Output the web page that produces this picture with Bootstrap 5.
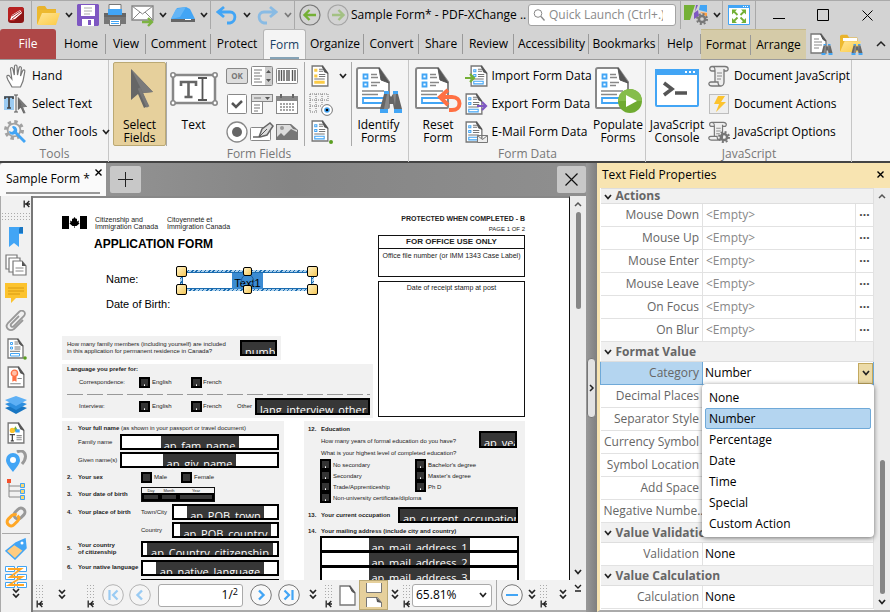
<!DOCTYPE html>
<html lang="en">
<head>
<meta charset="utf-8">
<meta name="viewport" content="width=device-width, initial-scale=1">
<title>Sample Form* - PDF-XChange Editor</title>
<link rel="stylesheet" href="https://cdn.jsdelivr.net/npm/bootstrap@5.3.0/dist/css/bootstrap.min.css">
<style>
:root{--ui:"Open Sans","Noto Sans",sans-serif;--doc:"Liberation Sans",Arial,sans-serif}
body{font:12px/16px var(--ui);color:#000;background:#d3d3d3;height:100vh;overflow:hidden}
button,input,select{font:inherit;color:inherit}
button{background:none;border:0;padding:0}
svg{display:block;flex:none}
.cell{display:flex;align-items:center;justify-content:center;min-width:0}
.s8{width:8px;height:8px}.s22{width:22px;height:22px}.s24{width:24px;height:24px}.s48{width:48px;height:48px}
.rule{border-left:1px solid #a9a9a9}
/* title bar */
.titlebar{display:grid;height:29px;flex:none;border-top:1px solid #aaa;grid-template-columns:31px 32px 11px 27px 28px 28px 12px 28px 13px 32px 10px 30px 12px 31px 26px minmax(100px,1fr) 148px 35px 11px 33px 46px 44px 45px}
.quick{height:22px;background:#fff;border:1px solid #a3a3a3;border-radius:3px;color:#888}
.quick input{border:0;background:none;outline:0;padding:0;width:100%}
.quick input::placeholder{color:#8a8a8a;opacity:1}
/* ribbon tabs */
.tabs{display:grid;height:31px;flex:none;grid-template-columns:56fr 50fr 40fr 65fr 52fr 43fr 58fr 55fr 44fr 51fr 75fr 70fr 42fr 50fr 55fr 84fr;border-bottom:1px solid #9b9b9b}
.tabs .tab{position:relative;white-space:nowrap;min-width:0}
.tabs .tab.div::after{content:"";position:absolute;right:0;top:5px;height:20px;border-right:1px solid #999}
.tab.file{background:#ae4747;color:#fff;border-radius:3px 3px 0 0}
.tab.active{background:#f4f4f4;color:#183f63;border-radius:3px 3px 0 0;border:1px solid #b5b5b5;border-bottom:0}
.tab.active::after{content:"";position:absolute;left:6px;right:6px;bottom:0;height:2px;background:#86a3b6}
.tab.ctx{background:#d5cba8;border-top:1px solid #c5b98a}
/* ribbon */
.ribbon{height:103px;flex:none;background:#f4f4f4;border-bottom:2px solid #444;display:grid;grid-template-columns:109px 300px 237px 206px 1fr}
.group{display:flex;flex-direction:column;border-right:1px solid #c6c6c6;padding:2px 3px 0 4px;min-width:0}
.group.tight{padding:2px 1px 0 2px}
.group .tools{display:flex;height:84px}
.group .cap{text-align:center;color:#777}
.big{width:54px;flex:none;line-height:13px;display:flex;flex-direction:column;align-items:center;justify-content:flex-start;padding-top:3px;white-space:nowrap}
.big.slim{width:52px}
.big svg{margin-bottom:5px}
.big.on{width:53px;background:#e6d09c;border:1px solid #bba974;border-radius:2px;padding-top:2px}
.line{display:flex;align-items:center;height:28px;gap:4px;white-space:nowrap}
.tight .line{gap:2px}
.trio{display:grid;grid-template-rows:repeat(3,28px);place-items:center}
.trio.three{grid-template-columns:repeat(3,1fr)}
/* work area */
.strip{height:33px;background:linear-gradient(90deg,#9a9a9a,#858585 50%,#8f8f8f)}
.strip .doc{width:106px;background:#fafafa;border-radius:3px 0 0 0;padding:8px 4px 0 6px;position:relative;white-space:nowrap}
.strip .doc::after{content:"";position:absolute;left:6px;right:6px;bottom:2px;height:2px;background:#999}
.strip .doc svg{margin-top:-2px}
.strip .sq{background:#c8c8c8;border-radius:2px;height:27px}
.side{width:33px;background:#f1f1f1;border-left:1px solid #aaa;border-right:2px solid #777}
.panes{gap:6px;padding-top:4px}
.pane.pane-tag{border-top:1px solid #aaa;padding:4px 3px 0;margin-top:-1px}
.grip{background:radial-gradient(circle,#aaa 0.8px,transparent 1px) 0 0/3px 3px}
.side .grip{height:10px;width:100%}
.viewer{background:#fff;border-top:2px solid #888;border-right:1px solid #111;overflow:hidden}
.vbar{width:16px;background:#ececec}
.thumb{background:#868686;border-radius:3px;width:5px;height:97px}
.thumb.long{height:134px}
.split{width:11px;background:linear-gradient(90deg,#999,#7f7f7f)}
.split .knob{width:9px;height:60px;background:#e2e2e2;border:1px solid #777;border-radius:4px}
/* paper */
.paper{font:6px/8px var(--doc);color:#222;padding:14px 44px 0 29px;white-space:nowrap;min-width:490px}
.paper label,.paper span{min-width:0}
.paper h1{font:700 12px/14px var(--doc);margin:7px 0 15px 32px;color:#000}
.paper .f7{font-size:7px;line-height:7px}
.shade{background:#f1f1f1}
.grow{display:grid;align-items:center}
.upper{width:311px}
.upper .intro{line-height:7px;width:72px}
.upper .intro+.intro{width:auto}
.who{display:grid;grid-template-columns:70px 142px;grid-template-rows:29px 20px;padding-left:44px;align-items:center;font-size:11px;color:#000}
.who label{padding-bottom:3px}.who span{padding-bottom:2px}
.fam{display:flex;align-items:center;width:219px;height:24px;margin-top:21px;padding:0 4px 0 5px;line-height:7px}
.fam .fld{width:37px}
.lang{height:54px;margin-top:4px;padding:1px 3px 0 5px}
.lrow{grid-template-columns:60px 13px 39px 12px 34px 18px 1fr;height:18px;padding-left:12px}
.lrow .fld{height:17px}
.dash{height:1px;margin:3px 0 2px;background:repeating-linear-gradient(90deg,#999 0 16px,transparent 16px 20px)}
.fld{border:2px solid #000;background:#fff;height:16px;overflow:hidden;display:flex;justify-content:center;align-items:flex-start;min-width:0}
.fld input{border:0;padding:0;background:#373737;color:#fff;font:11px/20px var(--ui);height:20px;text-align:center;min-width:0;outline:0;border-radius:0;flex:none}
.fld.full input{width:100%;text-align:left;padding-left:3px}
.w78{width:78px}.w73{width:73px}.w77{width:77px}.w91{width:91px}.w126{width:126px}.w108{width:108px}.w101{width:101px}
.tick{appearance:none;width:11px;height:11px;margin:0;border:2px solid #000;background:#333 radial-gradient(circle at 50% 90%,#fff 0.7px,transparent 1px);flex:none}
.tick.plain{background:#373737}
/* selected field with its drag handles */
.sel{width:142px;height:29px;position:relative}
.sel .frame{position:absolute;inset:4px;border:3px solid #1b6cb0;border-image:repeating-linear-gradient(135deg,#1b6cb0 0 1px,#aed2ee 1px 3px) 3;box-shadow:inset 0 0 0 3px #fff}
.sel .frame::after{content:"";position:absolute;inset:-1px;border:1px solid #1b6cb0}
.sel .h{position:absolute;width:11px;height:11px;border:1px solid #000;border-radius:2px;background:linear-gradient(135deg,#fff2c6,#f4c757)}
.sel .m{width:9px;height:9px}
.hl{left:0;top:0}.hr{right:0;top:0}.hlb{left:0;bottom:0}.hrb{right:0;bottom:0}.hm{left:67px;top:1px}.hmb{left:67px;bottom:1px}
.sel input{position:absolute;left:56px;top:7px;width:31px;height:16px;border:0;padding:3px 0 0;background:#3b8bd2;color:#000;font:11px/13px var(--doc);text-align:center;border-radius:0}
.sel .ring{position:absolute;left:65px;top:8px;width:13px;height:13px;border:1px solid #1c5a96;border-radius:50%}
.office{width:147px;text-align:center;line-height:10px;font-size:7px;padding-top:2px}
.office .text-end{font-size:6px}
.obox{border:1px solid #111}
.o1{height:42px;margin-top:1px;line-height:8px}
.o1 div+div{padding-top:3px}
.oh{font:700 8px/12px var(--doc);border-bottom:1px solid #111}
.o2{height:136px;margin-top:4px;padding-top:1px}
.lower{margin-top:3px}
.colA{width:222px;height:180px;padding:0 5px}
.colB{width:221px;height:180px;padding:0 4px 0 4px}
.a0{grid-template-columns:11px 1fr;height:12px;padding-top:2px}
.a1{grid-template-columns:11px 42px 1fr;height:18px}
.a2{grid-template-columns:11px 63px 13px 27px 13px 1fr;height:16px}
.a3{grid-template-columns:11px 63px 74px;height:18px}
.a4{grid-template-columns:11px 63px 31px 1fr;height:18px}
.a5{grid-template-columns:11px 63px 1fr;height:19px;line-height:7px}
.dob{display:grid;grid-template-columns:18px 18px 1fr;border:1px solid #111;height:15px;font-size:4px;line-height:5px;text-align:center}
.dob input{min-width:0;width:100%;height:8px;padding:0;border:2px solid #000;background:#373737}
.b0{grid-template-columns:13px 1fr;height:14px;padding-top:2px}
.edu{padding-left:13px;height:24px;line-height:12px}
.edu .fld{width:38px;height:17px;margin-top:-4px}
.b2{grid-template-columns:13px 82px 13px 1fr;grid-auto-rows:11px;padding-left:12px}
.b3{grid-template-columns:13px 77px 1fr;height:16px;margin:4px 3px 0 0}
.b4{height:13px}
.mailf{padding:0 2px 0 12px}
.mailf .fld{height:16px;margin-bottom:-1px}
/* status bar */
.status{display:grid;height:32px;flex:none;background:#f2f2f2;grid-template-columns:13px 32px 21px 27px 28px 93px 28px 28px 20px 12px 24px 29px 13px 11px 84px 31px 10px 14px minmax(20px,1fr) 12px;border-bottom:2px solid #aaa}
.box{background:#fff;border:1px solid #aaa;border-radius:3px;height:23px}
.box select{appearance:none;border:0;background:none;width:100%;padding:0 3px;outline:0}
.gp{display:flex;flex-direction:column;align-items:center;gap:2px;padding-top:4px}
.gp .grip{width:10px;height:14px}
.pgon{background:#e6d09c;border:1px solid #bba974}
sup{font-size:9px;top:-3px}
/* property panel */
.props{width:293px;flex:none;border-left:3px solid #f7e3b0;border-bottom:2px solid #aaa;background:#fff}
.props h2{font:12px/24px var(--ui);margin:0;background:#f8e4b1;padding:0 6px 0 2px;height:25px}
.ptab{width:100%;border-collapse:collapse;table-layout:fixed;color:#666}
.ptab .c1{width:102px}.ptab .c3{width:18px}
.ptab td,.ptab th{height:23px;padding:0 3px;border:1px solid #e2e2e2;border-left:0;white-space:nowrap;overflow:hidden;font-weight:400}
.ptab th{text-align:right}
.ptab td.e{color:#888}.ptab td.k{color:#000;padding:0 2px}
.ptab td.dots{padding:0;text-align:center}.dots button{font-weight:700;color:#444}
.ptab .sec th{height:20px;line-height:18px;background:#f1f1f1;text-align:left;font-weight:700;color:#666;border-color:#dedede}
.ptab .sec.cut th{height:15px;line-height:12px}
.ptab .cur th{background:#b4d5f0;border:1px solid #6fa9d8}
.ptab .cur td{border:1px solid #6fa9d8;padding:0}
.ptab .cur select{appearance:none;border:0;background:none;color:#000;padding:0 2px;flex:1;outline:0;min-width:0}
.ptab .cur .dd{width:15px;height:21px;background:#ecdba8;border:1px solid #c3a95f}
.pick{position:absolute;left:102px;right:0;top:196px;background:#fff;border-radius:4px;box-shadow:0 1px 5px rgba(0,0,0,.55);padding:3px;margin:0;list-style:none;color:#000}
.pick li{height:21px;line-height:19px;padding:0 3px;border:1px solid transparent;border-radius:2px}
.pick li[aria-selected=true]{background:#b4d5f0;border-color:#6fa9d8}
</style>
<script src="https://cdn.jsdelivr.net/npm/bootstrap@5.3.0/dist/js/bootstrap.bundle.min.js"></script>
</head>
<body class="d-flex flex-column">
<svg width="0" height="0" class="position-absolute" aria-hidden="true">
<defs>
<linearGradient id="ga" x2="1" y2="1"><stop stop-color="#ffe597"/><stop offset="1" stop-color="#fccb45"/></linearGradient>
<symbol id="cv" viewBox="0 0 8 8"><path d="M1 2l3 3.5L7 2" fill="none" stroke="#222" stroke-width="1.7"/></symbol>
<symbol id="dbl" viewBox="0 0 10 12"><path d="M2 1l3 3 3-3M2 6l3 3 3-3" fill="none" stroke="#222" stroke-width="1.7"/></symbol>
<symbol id="bar" viewBox="0 0 8 8"><path d="M1.2 .5v7M2 4h5M6.3 1l-3 3 3 3" fill="none" stroke="#222" stroke-width="1.3"/></symbol>
<symbol id="logo" viewBox="0 0 16 16"><rect width="16" height="16" rx="3" fill="#8c1515"/><path d="M0 3a3 3 0 013-3h10a3 3 0 013 3L6 14H3a3 3 0 01-3-3z" fill="#b72222"/><path d="M2 13l2-5 8-5 2 3-7 6z" fill="#fff"/><path d="M4 12l9-7M4 9l8-5" stroke="#a11c1c" stroke-width=".9"/></symbol>
<symbol id="folder" viewBox="0 0 24 22"><path d="M1 3l2-1h6l2 3h9v5H1z" fill="#e9b32c"/><path d="M1 20V6h19v14z" fill="#edb92f"/><path d="M6 9h18l-4 12H1z" fill="url(#ga)"/></symbol>
<symbol id="save" viewBox="0 0 22 22"><path d="M0 1l1-1h20l1 1v20l-1 1H1l-1-1z" fill="#7e57c2"/><path d="M4 1h14v11H4z" fill="#fff"/><path d="M7 4h8M7 7h8M7 10h6" stroke="#aaa"/><path d="M5 22v-7h12v7z" fill="#fff"/><path d="M11 16h3v5h-3z" fill="#7e57c2"/></symbol>
<symbol id="print" viewBox="0 0 22 22"><path d="M5 .5h12v7H5z" fill="#fff" stroke="#777"/><path d="M0 9h22v11H0z" fill="#777"/><path d="M0 9h22v4H0z" fill="#666"/><path d="M4 5h14v6H4z" fill="#42a5f5"/><path d="M5.500 15.500h11v6h-11z" fill="#fff" stroke="#777"/><path d="M7 17.500h8M7 19.500h8" stroke="#42a5f5"/></symbol>
<symbol id="mail" viewBox="0 0 24 22"><path d="M1 2h21v14H1z" fill="#fff" stroke="#888" stroke-width="1.4"/><path d="M1 2l10.500 8L22 2M1 16l8-8M22 16l-8-8" fill="none" stroke="#888"/><path d="M11 18h9M17 14l4 4-4 4" fill="none" stroke="#7cb342" stroke-width="2.4"/></symbol>
<symbol id="scan" viewBox="0 0 24 20"><path d="M6 3l9-1 4 2 5 10H0z" fill="#42a5f5"/><path d="M5 4l10-2-6 10-9 2z" fill="#64b5f6"/><path d="M0 14h24v3H0z" fill="#666"/><path d="M14 14h6v1h-6z" fill="#fff"/></symbol>
<symbol id="undo" viewBox="0 0 22 20"><path d="M8 2L2 7l6 5M2 7h12c7 0 6 10 0 11h-3" fill="none" stroke="#42a5f5" stroke-width="2.800"/></symbol>
<symbol id="leftc" viewBox="0 0 22 22"><circle cx="11" cy="11" r="10" fill="none" stroke="#777" stroke-width="1.2"/><path d="M17 11H6M10.500 6L5.500 11l5 5" fill="none" stroke="#74b035" stroke-width="2.400"/></symbol>
<symbol id="lens" viewBox="0 0 12 12"><circle cx="5" cy="4.500" r="3.800" fill="none" stroke="#888"/><path d="M8 7.500l3.500 4" stroke="#888" stroke-width="1.400"/></symbol>
<symbol id="gear" viewBox="0 0 12 12"><circle cx="6" cy="6" r="5" fill="none" stroke="#777" stroke-width="2" stroke-dasharray="2 1.927"/><circle cx="6" cy="6" r="3.100" fill="none" stroke="#777" stroke-width="2.500"/></symbol>
<symbol id="theme" viewBox="0 0 24 22"><path d="M0 1h11L6 16H0z" fill="#74b035"/><path d="M12 1h2l-3 7zM10 9l4-3 1 6-5 3z" fill="#7e57c2"/><path d="M16 1h7v7l-8-2z" fill="#42a5f5"/><path d="M16 8l7 1v4z" fill="#ff9e40"/><use href="#gear" x="12" y="9" width="12" height="12"/></symbol>
<symbol id="full" viewBox="0 0 22 20"><path d="M.5.500h21v19H.5z" fill="#fff" stroke="#42a5f5"/><path d="M0 0h22v3H0z" fill="#42a5f5"/><path d="M15 1.500h5" stroke="#fff" stroke-dasharray="1 1"/><path d="M4 4.500h5l-5 5zM18 4.500h-5l5 5zM4 18h5l-5-5zM18 18h-5l5-5z" fill="#74b035"/><path d="M6 6.500l3.500 3.500M16 6.500L12.500 10M6 16l3.500-3.500M16 16l-3.500-3.500" stroke="#74b035" stroke-width="1.800"/></symbol>
<symbol id="bino" viewBox="0 0 22 22"><path d="M4 0h5v3H4zm9 0h5v3h-5zM0 18h8v4H0zm14 0h8v4h-8z" fill="#42a5f5"/><path d="M4 3h5l2 3 2-3h5l4 15h-8l-1-5h-4l-1 5H0z" fill="#666"/><path d="M7 3h2v10L8 18H4zM13 3h3l-1 12z" fill="#888"/></symbol>
<symbol id="pg" viewBox="0 0 17 21"><path d="M1 1h10l5 7v12H1z" fill="#fff" stroke="#777" stroke-width="1.300"/><path d="M10.500 1L16 8l-3-1.500z" fill="#555" stroke="#555"/></symbol>
<symbol id="fd" viewBox="0 0 17 21"><use href="#pg" width="17" height="21"/><path d="M3.500 4.500h2v2h-2zM3.500 9h2v2h-2zM3.500 15.500h9v2.500h-9z" fill="none" stroke="#42a5f5"/><path d="M7.500 4h4M7.500 6h4M7.500 9h6M7.500 11h6M3 13.300h10" stroke="#777"/></symbol>
<symbol id="sdoc" viewBox="0 0 24 22"><use href="#pg" width="17" height="21"/><path d="M4 6h5M4 9h8M4 12h8M4 15h5" stroke="#888"/><use href="#bino" x="11" y="11" width="12" height="11"/></symbol>
<symbol id="sfold" viewBox="0 0 24 22"><use href="#folder" width="22" height="20"/><path d="M4 5h14v3H4z" fill="#fff"/><use href="#bino" x="12" y="11" width="12" height="11"/></symbol>
<symbol id="hand" viewBox="0 0 20 24"><path d="M6 23L2 16 .8 13c0-2 2-2 3-.5l2 2.500L4.500 5c0-2 2-2 2.500 0l1.300 6L8.500 2.500c0-2 2.500-2 2.500 0l.5 8.500L13 4c.5-2 2.600-1.500 2.400.3L14.500 12l2-5c.8-2 2.600-1 2.300.5L17 17l-2.500 6z" fill="#fff" stroke="#777" stroke-width="1.200"/></symbol>
<symbol id="arr" viewBox="0 0 24 40"><path d="M1 0v31l7-6 6 14 4-2-5-13 10-1z" fill="#666"/><path d="M1 0l22 23-10 1z" fill="#7a7a7a"/><path d="M9 19l9 19" stroke="#777" stroke-width="3"/></symbol>
<symbol id="selt" viewBox="0 0 24 20"><path d="M0 2h10v14H0z" fill="#9bcbf2"/><path d="M1 5V3h8v2M5 3v11M3 14h4" fill="none" stroke="#444" stroke-width="1.700"/><path d="M10 1h4M12 1v17M10 18h4" stroke="#555"/><use href="#arr" x="13" y="3" width="11" height="17"/></symbol>
<symbol id="other" viewBox="0 0 24 24"><use href="#gear" width="20" height="20" opacity=".65"/><circle cx="10" cy="10" r="5.500" fill="#f4f4f4"/><path d="M8 7l2 3-2 2-3-1c0 3 3 5 6 3l9 9 2-2-9-9c1-3-1-6-4-6z" fill="#42a5f5"/></symbol>
<symbol id="text" viewBox="0 0 48 36"><path d="M3 4h42v28H3z" fill="#fff" stroke="#888" stroke-width="2.500"/><g fill="#fff" stroke="#888" stroke-width="1.600"><circle cx="3" cy="4" r="2.200"/><circle cx="45" cy="4" r="2.200"/><circle cx="3" cy="32" r="2.200"/><circle cx="45" cy="32" r="2.200"/></g><path d="M11 15v-4h15v4M18.500 11v15M14.500 26h8" fill="none" stroke="#666" stroke-width="2.600"/><path d="M28 7h9M32.500 7v22M28 29h9" stroke="#555" stroke-width="1.800"/></symbol>
<symbol id="okb" viewBox="0 0 22 22"><rect x=".5" y="3.500" width="21" height="15" rx="1.500" fill="#ddd" stroke="#888"/></symbol>
<symbol id="chk" viewBox="0 0 22 22"><rect x="1.500" y="1.500" width="19" height="19" rx="1" fill="#fff" stroke="#888"/><path d="M6 10l4 4 6-6" fill="none" stroke="#555" stroke-width="2.500"/></symbol>
<symbol id="rad" viewBox="0 0 22 22"><circle cx="11" cy="11" r="10" fill="#fff" stroke="#888" stroke-width="1.300"/><circle cx="11" cy="11" r="5" fill="#666"/></symbol>
<symbol id="lst" viewBox="0 0 22 22"><rect x=".5" y="1.500" width="21" height="19" rx="1" fill="#fff" stroke="#888"/><path d="M14 2h7v18h-7z" fill="#ccc"/><path d="M3 5h8M3 8h6M3 11h8M3 14h6M3 17h8" stroke="#777"/><path d="M17.500 5l2.500 3h-5zM17.500 17l2.500-3h-5z" fill="#555"/></symbol>
<symbol id="cmb" viewBox="0 0 22 22"><path d="M.5 8.500h11v12H.5z" fill="#fff" stroke="#888"/><rect x=".5" y="1.500" width="21" height="7" fill="#ddd" stroke="#888"/><path d="M14 4h5l-2.500 3z" fill="#555"/><path d="M3 5h7M3 12h6M3 15h6M3 18h4" stroke="#777"/></symbol>
<symbol id="sign" viewBox="0 0 24 22"><rect x=".5" y="6.500" width="20" height="13" rx="1" fill="#fff" stroke="#888"/><path d="M3 16h6l3-8 8-6 3 3-6 9-7 2z" fill="#ddd" stroke="#666" stroke-width="1.500"/><path d="M9 16l8-8" stroke="#555"/></symbol>
<symbol id="brc" viewBox="0 0 22 22"><rect x=".5" y="3.500" width="21" height="15" rx="1" fill="#fff" stroke="#888"/><path d="M3 5v11M5.500 5v11M8 5v11M11 5v11M13 5v11M16.500 5v11M19 5v11" stroke="#555" stroke-width="1.400"/></symbol>
<symbol id="cal" viewBox="0 0 22 22"><rect x=".5" y="3.500" width="21" height="17" fill="#fff" stroke="#888"/><path d="M0 3h22v5H0z" fill="#888"/><path d="M5 1v4M17 1v4" stroke="#666" stroke-width="2"/><path d="M4 11h15M4 14h15M4 17h15" stroke="#888" stroke-width="1.500" stroke-dasharray="2 1"/></symbol>
<symbol id="img" viewBox="0 0 22 22"><path d="M0 3h15l7 6v10H0z" fill="#777"/><path d="M1 4h13l3 4 4 1v2l-6-3-7 7-3-3-4 4z" fill="#ddd"/><circle cx="6" cy="7" r="2" fill="#999"/></symbol>
<symbol id="grd" viewBox="0 0 24 22"><path d="M1 1h18M1 7h18M1 13h12M1 19h8M1 1v18M7 1v18M13 1v12M19 1v8" stroke="#777" stroke-dasharray="1 1"/><circle cx="18" cy="17" r="5.400" fill="#fff" stroke="#777"/><circle cx="18" cy="17" r="2.800" fill="#42a5f5"/><circle cx="18" cy="17" r="1.300"/></symbol>
<symbol id="yel" viewBox="0 0 17 21"><use href="#pg" width="17" height="21"/><path d="M3 3.500h3v3H3zM3 9h3v3H3zM3 15h10v3H3z" fill="#fccb45"/><path d="M7.500 4h4M7.500 6h4M7.500 9h6M7.500 11h6M3 13.300h10" stroke="#777"/></symbol>
<symbol id="lgd" viewBox="0 0 34 42"><path d="M1 3q0-2 2-2h20l10 14v25q0 1-1 1H2q-1 0-1-1z" fill="#fff" stroke="#888" stroke-width="2"/><path d="M23 1l10 15-8-3z" fill="#555" stroke="#555"/><path d="M7.500 7.500h4v4h-4zM7.500 15.500h4v4h-4zM7 31h21v5H7z" fill="none" stroke="#42a5f5" stroke-width="1.800"/><path d="M15 7.500h6M15 10.500h7M15 15.500h9M15 18.500h6M6 24h22M6 27.500h16" stroke="#888" stroke-width="1.500"/></symbol>
<symbol id="ident" viewBox="0 0 48 48"><use href="#lgd" x="1" y="2" width="34" height="42"/><use href="#bino" x="25" y="26" width="22" height="22"/></symbol>
<symbol id="reset" viewBox="0 0 48 48"><use href="#lgd" x="1" y="2" width="34" height="42"/><path d="M34 25l-8 7 8 8M27 32h11c10 0 10 13 0 13h-3" fill="none" stroke="#ff7043" stroke-width="4"/></symbol>
<symbol id="popu" viewBox="0 0 48 48"><use href="#lgd" x="1" y="2" width="34" height="42"/><circle cx="36" cy="36" r="12" fill="#70ab32"/><path d="M24 36a12 12 0 0124 0z" fill="#86bd4b"/><path d="M32 30l11 6-11 6z" fill="#fff"/></symbol>
<symbol id="cons" viewBox="0 0 44 38"><rect x="1" y="1" width="42" height="36" rx="1" fill="#fff" stroke="#42a5f5" stroke-width="2"/><path d="M0 0h44v6H0z" fill="#42a5f5"/><path d="M30 3h10" stroke="#fff" stroke-width="2" stroke-dasharray="2 2"/><path d="M9 14l8 6-8 6M20 24h12" fill="none" stroke="#555" stroke-width="3.500"/></symbol>
<symbol id="imp" viewBox="0 0 24 24"><use href="#fd" x="5" y="1" width="18" height="22"/><path d="M0 14h8M5 10l4 4-4 4" fill="none" stroke="#74b035" stroke-width="2.200"/></symbol>
<symbol id="exp" viewBox="0 0 24 24"><use href="#fd" x="0" y="1" width="18" height="22"/><path d="M12 14h9M17 10l4 4-4 4" fill="none" stroke="#7e57c2" stroke-width="2.200"/></symbol>
<symbol id="eml" viewBox="0 0 24 24"><use href="#fd" x="0" y="1" width="18" height="22"/><path d="M12.500 15.500h10v7h-10zl5 4 5-4" fill="#eee" stroke="#777"/></symbol>
<symbol id="scr" viewBox="0 0 22 22"><path d="M4 1.500h13c4 0 4 4.500 1 4.500h-2v11c0 3-2 4-3 4H4c-4 0-4-4-1-4h4V6H4c-3 0-3-4.500 0-4.500 3 0 3 2 3 4.500M13 21c-3 0-3-4-3-4H4M16 6V4" fill="#eee" stroke="#777" stroke-width="1.300"/><path d="M9 8h5M9 11h5M9 14h4" stroke="#888"/></symbol>
<symbol id="scg" viewBox="0 0 22 22"><use href="#scr" width="20" height="20"/><use href="#gear" x="10" y="10" width="12" height="12"/></symbol>
<symbol id="act" viewBox="0 0 22 22"><path d="M1.500 1.500h19v19h-19z" fill="#eee" stroke="#888" stroke-dasharray="1 1"/><path d="M10 3h7l-4 6h5L8 19l3-8H6z" fill="#fcc32e"/></symbol>
<symbol id="bm" viewBox="0 0 22 22"><path d="M4 1h14v7h-4v13l-5-4-5 4z" fill="#42a5f5"/><path d="M15 1h3v6h-4V3z" fill="#1976c2"/></symbol>
<symbol id="pgs" viewBox="0 0 22 22"><g fill="#fff" stroke="#777" stroke-width="1.200"><path d="M1 1h11v14H1z"/><path d="M4 4h11v14H4z"/><path d="M8 7h9l4 5v9H8z"/></g><path d="M17 7v5h4z" fill="#555"/><path d="M10.500 14h8M10.500 17h8" stroke="#888"/></symbol>
<symbol id="cmt" viewBox="0 0 22 22"><path d="M0 1h22v15H11l-5 5v-5H0z" fill="#fcc32e"/><path d="M3 6h16M3 9h16M3 12h12" stroke="#d89a10"/></symbol>
<symbol id="clip" viewBox="0 0 22 22"><path d="M14 6l-8 8c-1 2 1 4 3 2l10-10c3-4-2-7-5-4L3 13c-4 5 2 9 6 6l9-9" fill="none" stroke="#999" stroke-width="1.800"/></symbol>
<symbol id="pfd" viewBox="0 0 22 22"><use href="#fd" x="2" width="17" height="21"/><circle cx="20" cy="20" r="1.800" fill="#5a9e20"/></symbol>
<symbol id="cert" viewBox="0 0 17 21"><use href="#pg" width="17" height="21"/><circle cx="7" cy="7" r="3" fill="#ffc0a8" stroke="#ff7043" stroke-width="1.300"/><path d="M5 10v5l2-1 2 1v-5" fill="#ff7043"/><path d="M10 12h4M3 17h10" stroke="#888"/></symbol>
<symbol id="lay" viewBox="0 0 22 22"><path d="M0 14l11-4 11 4-11 6z" fill="#1976c2"/><path d="M0 10l11-4 11 4-11 6z" fill="#2e8fdf"/><path d="M0 6l11-4 11 4-11 6z" fill="#5eb0f5"/></symbol>
<symbol id="cont" viewBox="0 0 17 21"><use href="#pg" width="17" height="21"/><path d="M8 4l3 5H5z" fill="#74b035"/><circle cx="5" cy="8" r="2.500" fill="#fcc32e"/><path d="M8 7h4v3H8z" fill="#42a5f5"/><path d="M2.500 12h5M5 12v6M3.500 18h3" stroke="#444" stroke-width="1.200"/><path d="M9 13h5M9 15h5M9 17h5" stroke="#888"/></symbol>
<symbol id="pin" viewBox="0 0 22 22"><path d="M12 2c7-4 12 4 5 12" fill="none" stroke="#999" stroke-width="3"/><path d="M8 22C5 18 1 14 1 10a7 7 0 0114 0c0 4-4 8-7 12z" fill="#42a5f5"/><circle cx="8" cy="10" r="3" fill="#fff"/></symbol>
<symbol id="tree" viewBox="0 0 22 22"><path d="M4 4v15h11M4 8h11M4 13h11" fill="none" stroke="#888"/><path d="M2 1h4v4H2z" fill="#f4512c"/><path d="M15.500 5.500h4v4h-4zM15.500 11.500h4v4h-4zM15.500 17.500h4v4h-4z" fill="#fcd76e" stroke="#42a5f5"/></symbol>
<symbol id="link" viewBox="0 0 22 22"><g fill="none" stroke-width="3" transform="rotate(-45 11 11)"><rect x="10" y="7" width="12" height="8" rx="4" stroke="#999"/><path d="M13 11c0 3-1 4-4 4H4c-5 0-5-8 0-8h5c2 0 3 1 4 3" stroke="#ffa726"/></g></symbol>
<symbol id="tag" viewBox="0 0 22 22"><path d="M11 5l9-4 1 9L10 21 1 13z" fill="#ffcc80" stroke="#42a5f5" stroke-width="1.500"/><path d="M11 5l9-4 1 9-3 3-9-6z" fill="#42a5f5"/><circle cx="17" cy="5" r="1.500" fill="#fff"/></symbol>
<symbol id="ord" viewBox="0 0 22 22"><path d="M.5.500h9v5h-9zM12.500.500h9v5h-9zM.5 8.500h9v5h-9zM12.500 8.500h9v5h-9zM.5 16.500h9v5h-9zM12.500 16.500h9v5h-9z" fill="#fff" stroke="#42a5f5"/><path d="M3 3h13L5 11h12L4 19h15" fill="none" stroke="#ffa726" stroke-width="1.800"/></symbol>
<symbol id="circ" viewBox="0 0 22 22"><circle cx="11" cy="11" r="10.300" fill="#f8f8f8" stroke="#777"/></symbol>
<symbol id="nx" viewBox="0 0 22 22"><use href="#circ" width="22" height="22"/><path d="M9 6.500l4.500 4.500L9 15.500" fill="none" stroke="#42a5f5" stroke-width="2.400"/></symbol>
<symbol id="ls" viewBox="0 0 22 22"><use href="#circ" width="22" height="22"/><path d="M6.500 6.500L11 11l-4.500 4.500M14.500 6v10" fill="none" stroke="#42a5f5" stroke-width="2.200"/></symbol>
</defs></svg>

<header class="titlebar">
<div class="cell"><svg width="16" height="16"><use href="#logo"/></svg></div>
<button class="cell rule" aria-label="Open"><svg class="s24"><use href="#folder"/></svg></button>
<button class="cell" aria-label="Open menu"><svg class="s8"><use href="#cv"/></svg></button>
<button class="cell" aria-label="Save"><svg class="s22"><use href="#save"/></svg></button>
<button class="cell" aria-label="Print"><svg class="s22"><use href="#print"/></svg></button>
<button class="cell" aria-label="Mail"><svg class="s24"><use href="#mail"/></svg></button>
<button class="cell" aria-label="Mail menu"><svg class="s8"><use href="#cv"/></svg></button>
<button class="cell" aria-label="Scan"><svg class="s24"><use href="#scan"/></svg></button>
<button class="cell" aria-label="Scan menu"><svg class="s8"><use href="#cv"/></svg></button>
<button class="cell rule" aria-label="Undo"><svg width="22" height="20"><use href="#undo"/></svg></button>
<button class="cell" aria-label="Undo menu"><svg class="s8"><use href="#cv"/></svg></button>
<button class="cell opacity-50" aria-label="Redo"><svg width="22" height="20" viewBox="0 0 22 20"><g transform="matrix(-1 0 0 1 22 0)"><use href="#undo" width="22" height="20"/></g></svg></button>
<button class="cell opacity-50" aria-label="Redo menu"><svg class="s8"><use href="#cv"/></svg></button>
<button class="cell rule" aria-label="Back"><svg class="s22"><use href="#leftc"/></svg></button>
<button class="cell opacity-50" aria-label="Forward"><svg class="s22" viewBox="0 0 22 22"><g transform="matrix(-1 0 0 1 22 0)"><use href="#leftc" width="22" height="22"/></g></svg></button>
<div class="cell justify-content-start text-nowrap">Sample Form* - PDF-XChange ..</div>
<div class="cell"><label class="quick d-flex align-items-center gap-1 w-100 ps-1"><svg width="12" height="12"><use href="#lens"/></svg><input type="search" placeholder="Quick Launch (Ctrl+.)" aria-label="Quick Launch"></label></div>
<button class="cell rule ms-1" aria-label="Themes"><svg class="s24"><use href="#theme"/></svg></button>
<button class="cell" aria-label="Themes menu"><svg class="s8"><use href="#cv"/></svg></button>
<button class="cell rule" aria-label="Full screen"><svg width="22" height="20"><use href="#full"/></svg></button>
<button class="cell rule" aria-label="Minimize"><svg width="12" height="12"><path d="M0 9.500h12" stroke="#000"/></svg></button>
<button class="cell" aria-label="Maximize"><svg width="12" height="12"><path d="M.5.500h11v11H.5z" fill="none" stroke="#000"/></svg></button>
<button class="cell" aria-label="Close"><svg width="11" height="11"><path d="M.5.500l10 10M10.500.500l-10 10" stroke="#000"/></svg></button>
</header>

<nav class="tabs" aria-label="Ribbon">
<button class="tab file">File</button><button class="tab div">Home</button><button class="tab div">View</button><button class="tab div">Comment</button><button class="tab">Protect</button><button class="tab active">Form</button><button class="tab div">Organize</button><button class="tab div">Convert</button><button class="tab div">Share</button><button class="tab div">Review</button><button class="tab div">Accessibility</button><button class="tab div">Bookmarks</button><button class="tab div">Help</button><button class="tab ctx div">Format</button><button class="tab ctx">Arrange</button>
<div class="d-flex align-items-center justify-content-between ps-1 pe-1">
<button aria-label="Find"><svg class="s24"><use href="#sdoc"/></svg></button><button aria-label="Search folder"><svg class="s24"><use href="#sfold"/></svg></button><button aria-label="Collapse ribbon"><svg class="ms-2" width="10" height="8"><path d="M1 6l4-4 4 4" fill="none" stroke="#222" stroke-width="1.500"/></svg></button>
</div>
</nav>

<section class="ribbon">
<div class="group">
<div class="tools flex-column">
<button class="line"><svg class="s24"><use href="#hand"/></svg>Hand</button>
<button class="line"><svg class="s24"><use href="#selt"/></svg>Select Text</button>
<button class="line"><svg class="s24"><use href="#other"/></svg>Other Tools<svg class="s8"><use href="#cv"/></svg></button>
</div><div class="cap">Tools</div>
</div>
<div class="group">
<div class="tools">
<button class="big on"><svg class="s48"><use href="#arr" x="14" y="4" width="24" height="40"/></svg>Select<br>Fields</button>
<button class="big rule"><svg class="s48"><use href="#text" y="6" width="48" height="36"/></svg>Text</button>
<div class="trio three px-1 flex-grow-1">
<button aria-label="Button"><svg class="s22" viewBox="0 0 22 22"><use href="#okb" width="22" height="22"/><text x="11" y="14" font-size="8" font-weight="700" text-anchor="middle" fill="#777">OK</text></svg></button><button aria-label="List box"><svg class="s22"><use href="#lst"/></svg></button><button aria-label="Barcode"><svg class="s22"><use href="#brc"/></svg></button>
<button aria-label="Check box"><svg class="s22"><use href="#chk"/></svg></button><button aria-label="Drop-down"><svg class="s22"><use href="#cmb"/></svg></button><button aria-label="Date"><svg class="s22"><use href="#cal"/></svg></button>
<button aria-label="Radio button"><svg class="s22"><use href="#rad"/></svg></button><button aria-label="Signature"><svg class="s24"><use href="#sign"/></svg></button><button aria-label="Image"><svg class="s22"><use href="#img"/></svg></button>
</div>
<div class="trio rule ps-1 pe-1">
<div class="d-flex align-items-center gap-2"><button aria-label="Highlight fields"><svg class="s22"><use href="#yel"/></svg></button><button aria-label="Highlight menu"><svg class="s8"><use href="#cv"/></svg></button></div>
<button class="me-auto" aria-label="Show grid"><svg class="s24"><use href="#grd"/></svg></button>
<button class="me-auto" aria-label="Fields pane"><svg width="26" height="24"><use href="#fd" width="22" height="22"/><circle cx="22" cy="22" r="2" fill="#5a9e20"/></svg></button>
</div>
<button class="big rule"><svg class="s48"><use href="#ident"/></svg>Identify<br>Forms</button>
</div><div class="cap">Form Fields</div>
</div>
<div class="group tight">
<div class="tools justify-content-between">
<button class="big"><svg class="s48"><use href="#reset"/></svg>Reset<br>Form</button>
<div>
<button class="line"><svg class="s24"><use href="#imp"/></svg>Import Form Data</button>
<button class="line"><svg class="s24"><use href="#exp"/></svg>Export Form Data</button>
<button class="line"><svg class="s24"><use href="#eml"/></svg>E-Mail Form Data</button>
</div>
<button class="big slim"><svg class="s48"><use href="#popu"/></svg>Populate<br>Forms</button>
</div><div class="cap">Form Data</div>
</div>
<div class="group">
<div class="tools">
<button class="big me-1"><svg class="s48"><use href="#cons" x="2" y="4" width="44" height="38"/></svg>JavaScript<br>Console</button>
<div>
<button class="line"><svg class="s22"><use href="#scr"/></svg>Document JavaScript</button>
<button class="line"><svg class="s22"><use href="#act"/></svg>Document Actions</button>
<button class="line"><svg class="s22"><use href="#scg"/></svg>JavaScript Options</button>
</div>
</div><div class="cap">JavaScript</div>
</div>
</section>

<main class="d-flex flex-grow-1 overflow-hidden">
<section class="d-flex flex-column flex-grow-1 overflow-hidden">
<div class="strip d-flex align-items-center flex-shrink-0">
<div class="doc align-self-stretch d-flex justify-content-between">Sample Form *<button class="align-self-start" aria-label="Close tab"><svg width="7" height="7"><path d="M.5.500l6 6M6.500.500l-6 6" stroke="#000" stroke-width="1.400"/></svg></button></div>
<button class="sq cell px-2 ms-1" aria-label="New tab"><svg width="15" height="15"><path d="M7.500 0v15M0 7.500h15" stroke="#222"/></svg></button>
<button class="sq cell px-2 ms-auto" aria-label="Close document"><svg width="13" height="13"><path d="M.5.500l12 12M12.500.500l-12 12" stroke="#111" stroke-width="1.200"/></svg></button>
</div>
<div class="d-flex flex-grow-1 overflow-hidden">
<nav class="side d-flex flex-column align-items-center flex-shrink-0 overflow-hidden" aria-label="Panes">
<button class="align-self-end my-1" aria-label="Collapse"><svg class="s8"><use href="#bar"/></svg></button>
<div class="grip flex-shrink-0"></div>
<div class="panes d-flex flex-column align-items-center" id="panes"></div>
<svg width="10" height="12"><use href="#dbl"/></svg>
</nav>
<div class="d-flex flex-column flex-grow-1 overflow-hidden">
<div class="d-flex flex-grow-1 overflow-hidden">
<article class="viewer flex-grow-1">
<div class="paper">
<div class="d-flex justify-content-between">
<div class="upper">
<div class="d-flex f7">
<svg width="25" height="13" viewBox="0 0 25 13" class="mt-1"><path d="M0 0h7v13H0zM18 0h7v13h-7z"/><path d="M12.500 1l1.500 2 1-.5v3l2-1-.5 2 1 1-3 2.500h-1.700V12h-.6v-2h-1.700l-3-2.500 1-1L8 4.500l2 1v-3l1 .5z"/></svg>
<div class="intro ps-2 pt-1">Citizenship and<br>Immigration Canada</div><div class="intro ps-2 pt-1">Citoyenneté et<br>Immigration Canada</div>
</div>
<h1>APPLICATION FORM</h1>
<div class="who">
<label for="t1">Name:</label>
<div class="sel"><div class="frame"></div><input id="t1" value="Text1"><i class="ring"></i><i class="h hl"></i><i class="h hr"></i><i class="h hlb"></i><i class="h hrb"></i><i class="h m hm"></i><i class="h m hmb"></i></div>
<span>Date of Birth:</span>
</div>
<div class="shade fam"><span>How many family members (including yourself) are included<br>in this application for permanent residence in Canada?</span><span class="fld full ms-auto"><input value="number" aria-label="Family members"></span></div>
<div class="shade lang">
<b>Language you prefer for:</b>
<div class="grow lrow"><span>Correspondence:</span><input type="checkbox" class="tick" id="l1"><label for="l1">English</label><input type="checkbox" class="tick" id="l2"><label for="l2">French</label></div>
<div class="dash"></div>
<div class="grow lrow"><span>Interview:</span><input type="checkbox" class="tick" id="l3"><label for="l3">English</label><input type="checkbox" class="tick" id="l4"><label for="l4">French</label><label for="l5">Other</label><span class="fld full"><input id="l5" value="lang_interview_other"></span></div>
</div>
</div>
<div class="office">
<div class="text-end"><b class="f7">PROTECTED WHEN COMPLETED - B</b><br>PAGE 1 OF 2</div>
<div class="obox o1"><div class="oh">FOR OFFICE USE ONLY</div><div>Office file number (or IMM 1343 Case Label)</div></div>
<div class="obox o2">Date of receipt stamp at post</div>
</div>
</div>
<div class="d-flex justify-content-between lower">
<div class="shade colA">
<div class="grow a0"><b>1.</b><span><b>Your full name</b> (as shown in your passport or travel document)</span></div>
<div class="grow a1"><span></span><label for="f1">Family name</label><span class="fld"><input id="f1" class="w78" value="ap_fam_name"></span></div>
<div class="grow a1"><span></span><label for="f2">Given name(s)</label><span class="fld"><input id="f2" class="w73" value="ap_giv_name"></span></div>
<div class="grow a2"><b>2.</b><b>Your sex</b><input type="checkbox" class="tick plain" id="x1"><label for="x1">Male</label><input type="checkbox" class="tick plain" id="x2"><label for="x2">Female</label></div>
<div class="grow a3"><b>3.</b><b>Your date of birth</b><div class="dob"><span>Day</span><span>Month</span><span>Year</span><input aria-label="Day"><input aria-label="Month"><input aria-label="Year"></div></div>
<div class="grow a4"><b>4.</b><b>Your place of birth</b><label for="f3">Town/City</label><span class="fld"><input id="f3" class="w77" value="ap_POB_town"></span></div>
<div class="grow a4"><span></span><span></span><label for="f4">Country</label><span class="fld"><input id="f4" class="w91" value="ap_POB_country"></span></div>
<div class="grow a5"><b>5.</b><b>Your country<br>of citizenship</b><span class="fld"><input aria-label="Citizenship" class="w126" value="ap_Country_citizenship"></span></div>
<div class="grow a5"><b>6.</b><b>Your native language</b><span class="fld"><input aria-label="Native language" class="w108" value="ap_native_language"></span></div>
<div class="grow a5"><b></b><b></b><span class="fld full"><input aria-label="Next field"></span></div>
</div>
<div class="shade colB">
<div class="grow b0"><b>12.</b><b>Education</b></div>
<div class="d-flex justify-content-between pe-1 edu"><div><div>How many years of formal education do you have?</div><div>What is your highest level of completed education?</div></div><span class="fld full"><input aria-label="Years" value="ap_years"></span></div>
<div class="grow b2">
<input type="checkbox" class="tick" id="e1"><label for="e1">No secondary</label><input type="checkbox" class="tick" id="e2"><label for="e2">Bachelor's degree</label>
<input type="checkbox" class="tick" id="e3"><label for="e3">Secondary</label><input type="checkbox" class="tick" id="e4"><label for="e4">Master's degree</label>
<input type="checkbox" class="tick" id="e5"><label for="e5">Trade/Apprenticeship</label><input type="checkbox" class="tick" id="e6"><label for="e6">Ph D</label>
<input type="checkbox" class="tick" id="e7"><label for="e7">Non-university certificate/diploma</label>
</div>
<div class="grow b3"><b>13.</b><b>Your current occupation</b><span class="fld full"><input aria-label="Occupation" value="ap_current_occupation"></span></div>
<div class="grow b0 b4"><b>14.</b><b>Your mailing address (include city and country)</b></div>
<div class="mailf"><span class="fld"><input class="w101" aria-label="Address 1" value="ap_mail_address_1"></span><span class="fld"><input class="w101" aria-label="Address 2" value="ap_mail_address_2"></span><span class="fld"><input class="w101" aria-label="Address 3" value="ap_mail_address_3"></span></div>
</div>
</div>
</div>
</article>
<div class="vbar d-flex flex-column align-items-center pt-1"><svg width="8" height="8"><path d="M1 6l3-3 3 3" fill="none" stroke="#555" stroke-width="1.500"/></svg><div class="thumb mt-1"></div><svg class="mt-auto mb-1" width="8" height="8"><use href="#cv"/></svg></div>
</div>
<footer class="status">
<div class="gp"><i class="grip"></i><svg class="s8"><use href="#bar"/></svg></div>
<button class="cell" aria-label="More"><svg width="10" height="12"><use href="#dbl"/></svg></button>
<div class="gp ms-1"><i class="grip"></i><svg class="s8"><use href="#bar"/></svg></div>
<button class="cell opacity-50" aria-label="First page"><svg class="s22" viewBox="0 0 22 22"><g transform="matrix(-1 0 0 1 22 0)"><use href="#ls" width="22" height="22"/></g></svg></button>
<button class="cell opacity-50" aria-label="Previous page"><svg class="s22" viewBox="0 0 22 22"><g transform="matrix(-1 0 0 1 22 0)"><use href="#nx" width="22" height="22"/></g></svg></button>
<div class="cell px-1"><label class="box d-flex align-items-center w-100 pe-1"><input class="border-0 bg-transparent text-end w-100 p-0" value="1" aria-label="Page">/<sup>2</sup></label></div>
<button class="cell" aria-label="Next page"><svg class="s22"><use href="#nx"/></svg></button>
<button class="cell" aria-label="Last page"><svg class="s22"><use href="#ls"/></svg></button>
<button class="cell" aria-label="More"><svg width="10" height="12"><use href="#dbl"/></svg></button>
<div class="gp"><i class="grip"></i><svg class="s8"><use href="#bar"/></svg></div>
<button class="cell" aria-label="Single page"><svg width="17" height="21"><use href="#pg"/></svg></button>
<button class="cell pgon" aria-label="Continuous"><svg width="18" height="24"><path d="M1.500 0v9.500h15V0M1.500 24V14.500h11l4 5V24" fill="#fff" stroke="#777"/><path d="M11 14l6 6-5-1z" fill="#555"/></svg></button>
<button class="cell" aria-label="More"><svg width="10" height="12"><use href="#dbl"/></svg></button>
<div class="gp"><i class="grip"></i><svg class="s8"><use href="#bar"/></svg></div>
<div class="cell"><label class="box d-flex align-items-center w-100 pe-1 me-1"><select aria-label="Zoom"><option>65.81%</option></select><svg class="s8"><use href="#cv"/></svg></label></div>
<button class="cell rule" aria-label="Zoom out"><svg class="s22" viewBox="0 0 22 22"><use href="#circ" width="22" height="22"/><path d="M5 11h12" stroke="#42a5f5" stroke-width="2"/></svg></button>
<button class="cell" aria-label="More"><svg width="10" height="12"><use href="#dbl"/></svg></button>
<div class="gp"><i class="grip"></i><svg class="s8"><use href="#bar"/></svg></div>
<button class="cell" aria-label="More"><svg width="10" height="12"><use href="#dbl"/></svg></button>
<div class="pt-1"><svg class="s8"><path d="M1 1l3 3 3-3M1 7h6" fill="none" stroke="#222" stroke-width="1.400"/></svg></div>
</footer>
</div>
</div>
</section>
<div class="split cell flex-shrink-0"><button class="knob cell" aria-label="Toggle panel"><svg width="6" height="8"><path d="M1 1l3 3-3 3" fill="none" stroke="#222" stroke-width="1.500"/></svg></button></div>

<aside class="props d-flex flex-column">
<h2 class="d-flex justify-content-between flex-shrink-0">Text Field Properties<button class="mt-1 align-self-start" aria-label="Close panel"><svg class="mt-1" width="7" height="7"><path d="M.5.500l6 6M6.500.500l-6 6" stroke="#000" stroke-width="1.400"/></svg></button></h2>
<div class="d-flex flex-grow-1 overflow-hidden">
<div class="flex-grow-1 position-relative">
<table class="ptab">
<colgroup><col class="c1"><col><col class="c3"></colgroup>
<tbody>
<tr class="sec cut"><th colspan="3"><svg class="s8 d-inline me-1"><use href="#cv"/></svg>Actions</th></tr>
<tr><th>Mouse Down</th><td class="e">&lt;Empty&gt;</td><td class="dots"><button>···</button></td></tr>
<tr><th>Mouse Up</th><td class="e">&lt;Empty&gt;</td><td class="dots"><button>···</button></td></tr>
<tr><th>Mouse Enter</th><td class="e">&lt;Empty&gt;</td><td class="dots"><button>···</button></td></tr>
<tr><th>Mouse Leave</th><td class="e">&lt;Empty&gt;</td><td class="dots"><button>···</button></td></tr>
<tr><th>On Focus</th><td class="e">&lt;Empty&gt;</td><td class="dots"><button>···</button></td></tr>
<tr><th>On Blur</th><td class="e">&lt;Empty&gt;</td><td class="dots"><button>···</button></td></tr>
<tr class="sec"><th colspan="3"><svg class="s8 d-inline me-1"><use href="#cv"/></svg>Format Value</th></tr>
<tr class="cur"><th><label for="cat">Category</label></th><td colspan="2"><div class="d-flex align-items-center"><select id="cat"><option>Number</option></select><span class="dd cell"><svg class="s8"><use href="#cv"/></svg></span></div></td></tr>
<tr><th>Decimal Places</th><td colspan="2"></td></tr>
<tr><th>Separator Style</th><td colspan="2"></td></tr>
<tr><th>Currency Symbol</th><td colspan="2"></td></tr>
<tr><th>Symbol Location</th><td colspan="2"></td></tr>
<tr><th>Add Space</th><td colspan="2"></td></tr>
<tr><th>Negative Numbe..</th><td colspan="2"></td></tr>
<tr class="sec"><th colspan="3"><svg class="s8 d-inline me-1"><use href="#cv"/></svg>Value Validation</th></tr>
<tr><th>Validation</th><td class="k" colspan="2">None</td></tr>
<tr class="sec"><th colspan="3"><svg class="s8 d-inline me-1"><use href="#cv"/></svg>Value Calculation</th></tr>
<tr><th>Calculation</th><td class="k" colspan="2">None</td></tr>
</tbody>
</table>
<ul class="pick" role="listbox" aria-label="Category"><li role="option">None</li><li role="option" aria-selected="true">Number</li><li role="option">Percentage</li><li role="option">Date</li><li role="option">Time</li><li role="option">Special</li><li role="option">Custom Action</li></ul>
</div>
<div class="vbar d-flex flex-column align-items-center py-1 flex-shrink-0"><svg width="8" height="8"><path d="M1 6l3-3 3 3" fill="none" stroke="#555" stroke-width="1.500"/></svg><div class="thumb long mt-auto"></div><svg class="mt-1 s8"><use href="#cv"/></svg></div>
</div>
</aside>
</main>
<script>
const panes={bm:"Bookmarks",pgs:"Thumbnails",cmt:"Comments",clip:"Attachments",pfd:"Fields",cert:"Signatures",lay:"Layers",cont:"Content",pin:"Destinations",tree:"Structure",link:"Links",tag:"Tags",ord:"Order"};
document.getElementById("panes").innerHTML=Object.entries(panes).map(([k,v])=>`<button class="pane pane-${k}" aria-label="${v}"><svg class="s22"><use href="#${k}"/></svg></button>`).join("");
</script>
</body>
</html>
